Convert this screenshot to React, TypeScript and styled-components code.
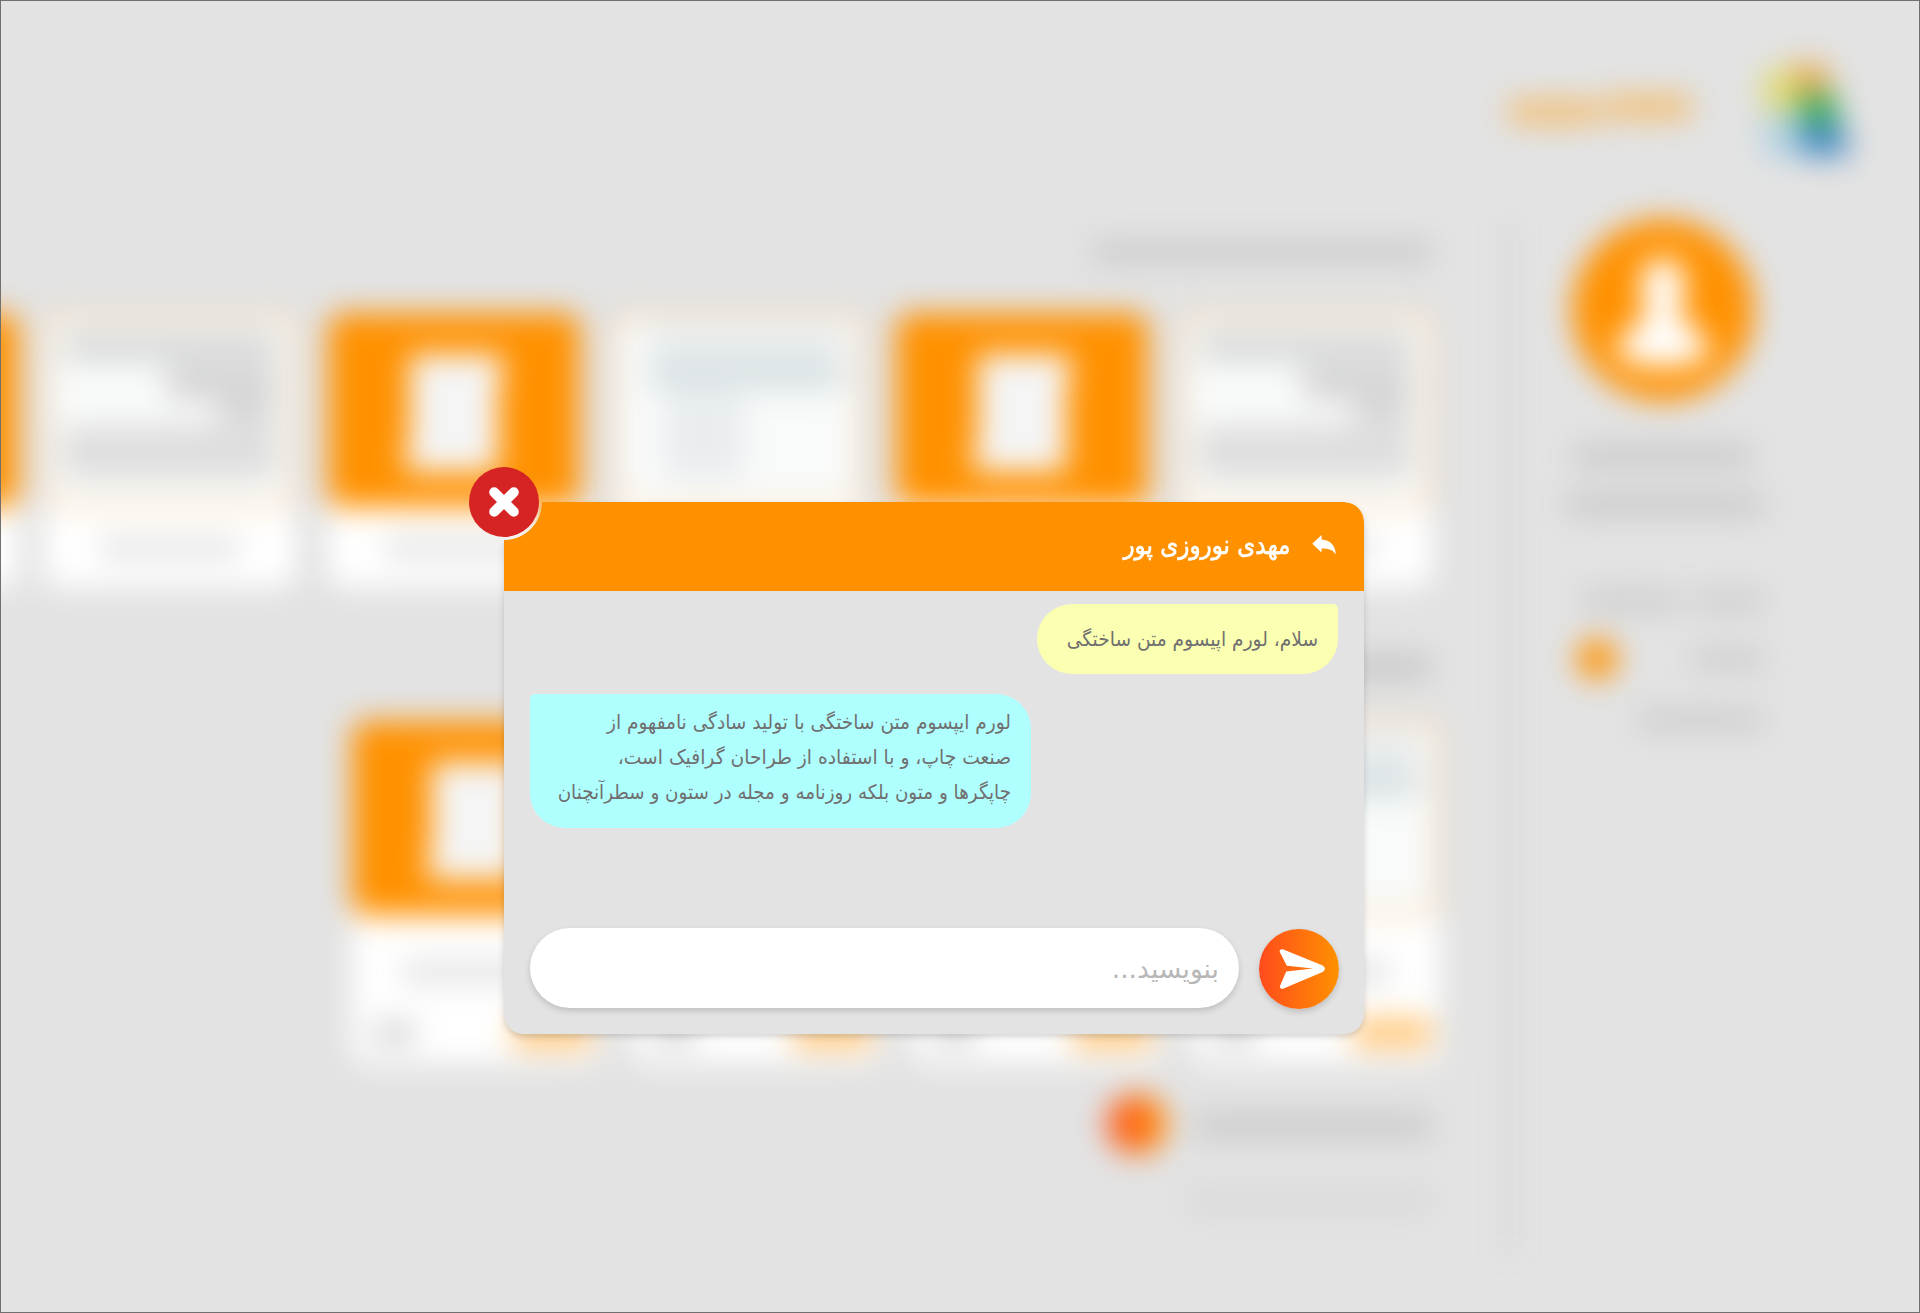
import React from "react";
import styled, { createGlobalStyle } from "styled-components";

const Global = createGlobalStyle`
  * { box-sizing: border-box; }
  html, body { margin: 0; padding: 0; background: #e3e3e3; }
  body { font-family: "DejaVu Sans", sans-serif; overflow: hidden; }
`;

const Screen = styled.div`
  position: relative;
  width: 1920px;
  height: 1313px;
  overflow: hidden;
  background: #e3e3e3;
`;

const Frame = styled.div`
  position: absolute;
  inset: 0;
  border: 1px solid #707070;
  pointer-events: none;
`;

/* ---------- blurred dashboard behind the dialog ---------- */

const Dashboard = styled.div`
  direction: rtl;
  width: 1920px;
  height: 1313px;
  filter: blur(15px);
  display: flex;
  flex-direction: column;
`;

const TopBar = styled.header`
  flex: none;
  height: 219px;
  padding: 58px 68px 0 0;
  display: flex;
  gap: 64px;
`;

const Logo = styled.svg`
  width: 96px;
  height: 104px;
`;

const Columns = styled.div`
  display: flex;
  height: 1037px;
`;

const Sidebar = styled.aside`
  flex: none;
  width: 411px;
  border-left: 1px solid #707070;
  padding-right: 155px;
  display: flex;
  flex-direction: column;
`;

const Avatar = styled.div`
  width: 182px;
  height: 182px;
  margin-right: 11px;
  border-radius: 50%;
  background: #ff9100;
`;

const Line = styled.div<{ $w: number; $h?: number; $mt?: number; $mr?: number; $c?: string }>`
  flex: none;
  width: ${(p) => p.$w}px;
  height: ${(p) => p.$h ?? 20}px;
  margin-top: ${(p) => p.$mt ?? 0}px;
  margin-right: ${(p) => p.$mr ?? 0}px;
  border-radius: 8px;
  background: ${(p) => p.$c ?? "#c9c9c9"};
`;

const MenuRow = styled.div<{ $mt: number }>`
  display: flex;
  align-items: center;
  height: 40px;
  margin-top: ${(p) => p.$mt}px;
`;

const Dot = styled.div`
  width: 40px;
  height: 40px;
  margin-right: 74px;
  border-radius: 50%;
  background: #ff9100;
`;

const Main = styled.main`
  flex: 1;
  min-width: 0;
  padding: 23px 77px 0 0;
`;

const Cards = styled.div<{ $mt: number; $mr?: number; $gap: number }>`
  display: flex;
  gap: ${(p) => p.$gap}px;
  margin-top: ${(p) => p.$mt}px;
  margin-right: ${(p) => p.$mr ?? 0}px;
`;

const Card = styled.div<{ $w: number; $h: number; $pull?: number }>`
  flex: none;
  width: ${(p) => p.$w}px;
  height: ${(p) => p.$h}px;
  margin-right: ${(p) => -(p.$pull ?? 0)}px;
  border-radius: 14px;
  background: #fff;
  overflow: hidden;
  display: flex;
  flex-direction: column;
`;

const Cover = styled.div<{ $solid?: boolean }>`
  flex: none;
  height: 194px;
  border-radius: 14px;
  border: 4px solid ${(p) => (p.$solid ? "#ff9100" : "#f6bf80")};
  background: ${(p) => (p.$solid ? "#ff9100" : "#f9fbfa")};
  display: flex;
  flex-direction: column;
  align-items: ${(p) => (p.$solid ? "center" : "flex-start")};
  justify-content: ${(p) => (p.$solid ? "center" : "flex-start")};
  padding: ${(p) => (p.$solid ? "6px 0 0" : "0 16px")};
`;

const Sheet = styled.svg`
  width: 102px;
  height: 118px;
`;

const Caption = styled.div`
  height: 78px;
  flex: none;
  display: flex;
  justify-content: center;
  align-items: center;
`;

const Footer = styled.div`
  display: flex;
  justify-content: space-between;
  align-items: center;
  padding-left: 20px;
`;

const Support = styled.div`
  display: flex;
  align-items: center;
  gap: 27px;
  height: 60px;
  margin-top: 31px;
`;

const SupportDot = styled.div`
  width: 60px;
  height: 60px;
  border-radius: 50%;
  background: linear-gradient(90deg, #ff4b1c, #ff9100);
`;

/* ---------- chat dialog ---------- */

const Dialog = styled.section`
  position: absolute;
  left: 504px;
  top: 502px;
  width: 860px;
  height: 532px;
  direction: rtl;
  display: flex;
  flex-direction: column;
  filter: drop-shadow(0 3px 3px rgba(0, 0, 0, 0.16));
`;

const DialogHeader = styled.header`
  flex: none;
  height: 89px;
  padding: 0 28px 4px 0;
  display: flex;
  align-items: center;
  gap: 22px;
  border-radius: 0 20px 0 0;
  background: #ff9100;
  mask-image: radial-gradient(circle at 0 0, transparent 37.6px, #000 38.4px);
`;

const Name = styled.h1`
  margin: 0;
  font-size: 26px;
  font-weight: 400;
  line-height: 36px;
  color: #fff;
  -webkit-text-stroke: 0.7px #fff;
  white-space: nowrap;
  transform-origin: right center;
  transform: scaleX(0.886);
`;

const DialogBody = styled.div`
  flex: 1;
  display: flex;
  flex-direction: column;
  padding: 13px 26px 25px;
  border-radius: 0 0 20px 20px;
  background: #e3e3e3;
`;

const Bubble = styled.div<{ $mine?: boolean }>`
  align-self: ${(p) => (p.$mine ? "flex-start" : "flex-end")};
  width: ${(p) => (p.$mine ? 301 : 501)}px;
  height: ${(p) => (p.$mine ? 70 : 134)}px;
  margin-bottom: 20px;
  padding: ${(p) => (p.$mine ? "18px 20px 0 0" : "11px 20px 0 0")};
  border-radius: ${(p) => (p.$mine ? "35px 5px 35px 35px" : "5px 35px 35px 35px")};
  background: ${(p) => (p.$mine ? "#fbffb1" : "#b0ffff")};
`;

const TextLine = styled.p<{ $sx: number }>`
  margin: 0;
  font-size: 20px;
  line-height: 35px;
  color: #707070;
  white-space: nowrap;
  transform-origin: right center;
  transform: scaleX(${(p) => p.$sx});
`;

const Composer = styled.form`
  margin-top: auto;
  margin-right: -1px;
  display: flex;
  align-items: flex-start;
  gap: 20px;
`;

const SendButton = styled.button`
  flex: none;
  width: 80px;
  height: 80px;
  margin-top: 1px;
  padding: 0 0 0 5px;
  border: 0;
  border-radius: 50%;
  background: linear-gradient(90deg, #ff4b1c, #ff9100);
  box-shadow: 0 3px 6px rgba(0, 0, 0, 0.16);
  direction: ltr;
  display: flex;
  align-items: center;
  justify-content: center;
`;

const Field = styled.input`
  flex: 1;
  min-width: 0;
  height: 80px;
  padding: 0 20px;
  border: 0;
  outline: 0;
  border-radius: 40px;
  background: #fff;
  box-shadow: 0 3px 6px rgba(0, 0, 0, 0.16);
  font-family: "DejaVu Sans", sans-serif;
  font-size: 26.5px;
  color: #707070;
  &::placeholder { color: #b7b7b7; opacity: 1; }
`;

const CloseButton = styled.button`
  position: absolute;
  left: 469px;
  top: 467px;
  width: 70px;
  height: 70px;
  padding: 0;
  border: 0;
  border-radius: 50%;
  background: #d62424;
  display: flex;
  align-items: center;
  justify-content: center;
`;

const ScrollSheet = () => (
  <Sheet viewBox="0 0 106 122" preserveAspectRatio="none">
    <path d="M7 0H103V30H99V122H3V92H7Z" fill="#f5f5f5" />
  </Sheet>
);

const NotesCover = () => (
  <Cover>
    <Line $w={212} $h={34} $mt={12} $c="#dadcdb" />
    <Line $w={110} $h={36} $mt={2} $c="#d6d6d6" />
    <Line $w={60} $h={22} $c="#d6d6d6" />
    <Line $w={212} $h={54} $mt={2} $c="#dddedd" />
  </Cover>
);

const PaperCover = () => (
  <Cover>
    <Line $w={196} $h={30} $mt={12} $c="#e5eaec" />
    <Line $w={196} $h={30} $mt={2} $c="#dae2e5" />
    <Line $w={80} $h={84} $mt={4} $mr={100} $c="#e9edef" />
  </Cover>
);

const SolidCover = () => (
  <Cover $solid>
    <ScrollSheet />
  </Cover>
);

const firstRow = ["notes", "solid", "paper", "solid", "notes", "solid"];
const secondRow = ["paper", "notes", "paper", "solid"];

const CoverOf = ({ kind }: { kind: string }) =>
  kind === "solid" ? <SolidCover /> : kind === "paper" ? <PaperCover /> : <NotesCover />;

export default function App() {
  return (
    <>
      <Global />
      <Screen>
        <Dashboard aria-hidden="true">
          <TopBar>
            <Logo viewBox="0 0 100 104" preserveAspectRatio="none">
              <path d="M8 14L44 8V54H8Z" fill="#e0dc74" />
              <path d="M40 6H72L80 36H40Z" fill="#eaa94e" />
              <path d="M46 36H82L88 68H46Z" fill="#34ac58" />
              <path d="M8 54H46V98H8Z" fill="#b2d2e2" />
              <path d="M46 66H90L98 98H46Z" fill="#4489c4" />
            </Logo>
            <Line $w={86} $h={24} $mt={37} $c="#f2be72" />
            <Line $w={94} $h={24} $mt={42} $mr={-60} $c="#f2be74" />
          </TopBar>
          <Columns>
            <Sidebar>
              <Avatar>
                <svg width="182" height="182" viewBox="3 3 182 182">
                  <path
                    d="M94 42C109 42 118 54 116 72C115 86 112 94 110 102C126 110 140 122 141 138C130 149 112 151 94 151C76 151 58 149 47 138C48 122 62 110 78 102C76 94 73 86 72 72C70 54 79 42 94 42Z"
                    fill="#fff"
                  />
                </svg>
              </Avatar>
              <Line $w={180} $h={22} $mt={44} $mr={12} />
              <Line $w={200} $h={22} $mt={27} />
              <MenuRow $mt={65}>
                <Line $w={72} $c="#cccccc" />
                <Line $w={100} $mr={12} $c="#cccccc" />
              </MenuRow>
              <MenuRow $mt={18}>
                <Line $w={74} $c="#cccccc" />
                <Dot />
              </MenuRow>
              <MenuRow $mt={21}>
                <Line $w={128} $c="#cccccc" />
              </MenuRow>
            </Sidebar>
            <Main>
              <Line $w={340} />
              <Cards $mt={51} $gap={32}>
                {firstRow.map((kind, i) => (
                  <Card key={i} $w={252} $h={274} $pull={i === 5 ? 6 : 0}>
                    <CoverOf kind={kind} />
                    <Caption>
                      <Line $w={140} $h={24} $mt={4} $c="#e5e5e5" />
                    </Caption>
                  </Card>
                ))}
              </Cards>
              <Line $w={250} $mt={70} $c="#c2c2c2" />
              <Cards $mt={44} $mr={-8} $gap={32}>
                {secondRow.map((kind, i) => (
                  <Card key={i} $w={248} $h={342}>
                    <CoverOf kind={kind} />
                    <Caption>
                      <Line $w={150} $h={26} $mt={36} $c="#e6e6e6" />
                    </Caption>
                    <Footer>
                      <Line $w={80} $h={30} $mt={25} $mr={8} $c="#ffc87c" />
                      <Line $w={44} $h={26} $mt={25} $c="#d8d8d8" />
                    </Footer>
                  </Card>
                ))}
              </Cards>
              <Support>
                <Line $w={238} $h={22} $mt={4} $c="#c8c8c8" />
                <SupportDot />
              </Support>
              <Line $w={246} $h={20} $mt={37} $c="#d7d7d7" />
            </Main>
          </Columns>
        </Dashboard>

        <Dialog>
          <DialogHeader>
            <svg width="24" height="20" viewBox="0 0 24 20" fill="#fff">
              <path d="M0.300 8.800L9.600 0V4.500C18 5 23.600 10.500 23.800 19.500C21 14.800 17 13.500 9.600 13.500V17.600Z" />
            </svg>
            <Name>مهدی نوروزی پور</Name>
          </DialogHeader>
          <DialogBody>
            <Bubble $mine>
              <TextLine $sx={0.93}>سلام، لورم اپیسوم متن ساختگی</TextLine>
            </Bubble>
            <Bubble>
              <TextLine $sx={0.927}>لورم ایپسوم متن ساختگی با تولید سادگی نامفهوم از</TextLine>
              <TextLine $sx={0.934}>صنعت چاپ، و با استفاده از طراحان گرافیک است،</TextLine>
              <TextLine $sx={0.915}>چاپگرها و متون بلکه روزنامه و مجله در ستون و سطرآنچنان</TextLine>
            </Bubble>
            <Composer>
              <SendButton type="button" aria-label="ارسال">
                <svg width="46" height="40" viewBox="0 0 46 40" fill="#fff">
                  <path d="M4.400 .4L42.500 16C47 18 47 21.500 42.500 23.500L4.600 39.500C2.200 40.400 .2 38.800 1.200 36.500L7.200 22.600L34 19.500L7.800 16.700L1 3.500C-.2 1.400 1.800 -.6 4.400 .4Z" />
                </svg>
              </SendButton>
              <Field placeholder="بنویسید..." />
            </Composer>
          </DialogBody>
        </Dialog>

        <CloseButton type="button" aria-label="بستن">
          <svg width="30" height="30" viewBox="0 0 30 30" stroke="#fff" strokeWidth="10" strokeLinecap="round">
            <path d="M5.200 5.200L24.800 24.800M24.800 5.200L5.200 24.800" />
          </svg>
        </CloseButton>
        <Frame />
      </Screen>
    </>
  );
}
